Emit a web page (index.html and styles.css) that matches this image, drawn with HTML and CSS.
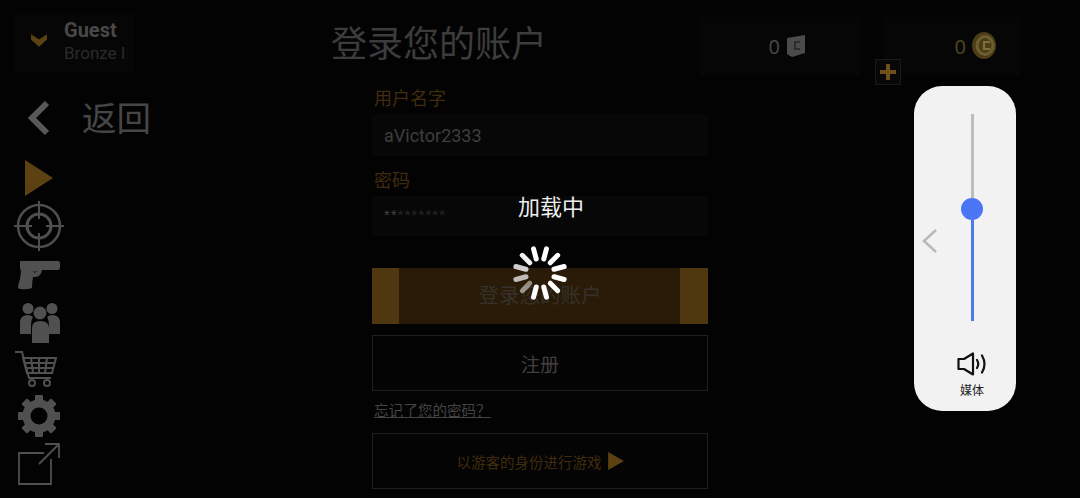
FILE: index.html
```html
<!DOCTYPE html>
<html lang="zh-CN">
<head>
    <meta charset="UTF-8">
    <title>登录您的账户</title>
    <link rel="stylesheet" href="styles.css">
</head>
<body>
<div class="stage">
    <!-- Top bar -->
    <header class="topbar">
        <div class="player">
            <svg class="rank" viewBox="0 0 18 14"><path d="M0 0 L9 6 L18 0 L18 6 L9 14 L0 6 Z"/></svg>
            <div class="player-text">
                <b>Guest</b>
                <span>Bronze I</span>
            </div>
        </div>
        <h1>登录您的账户</h1>
        <div class="wallet wallet-credit">
            <span>0</span>
            <svg class="cash" width="20" height="22" viewBox="0 0 20 22">
                <path d="M1 3 L19 0 L19 18 L6 22 L1 19 Z" fill="#4b4b4b"/>
                <path d="M14 7 L9 7 L9 14 L14 14" fill="none" stroke="#2d2d2d" stroke-width="2"/>
            </svg>
        </div>
        <div class="wallet wallet-gold">
            <span>0</span>
            <svg width="24" height="27" viewBox="0 0 24 27">
                <ellipse cx="12" cy="13.500" rx="12" ry="13.500" fill="#4a3d18"/>
                <ellipse cx="13" cy="13.500" rx="8" ry="9" fill="none" stroke="#6b5f30" stroke-width="3"/>
                <path d="M18 10 L12 10 L12 17 L18 17" fill="none" stroke="#7d7038" stroke-width="2"/>
            </svg>
        </div>
    </header>
    <button class="add-btn">
        <svg width="16" height="16" viewBox="0 0 16 16"><path d="M6 0 H10 V6 H16 V10 H10 V16 H6 V10 H0 V6 H6 Z"/></svg>
    </button>

    <div class="main">
        <!-- Left menu -->
        <nav class="sidebar">
            <a class="back">
                <svg width="26" height="36" viewBox="0 0 26 36"><path d="M21 3 L6 18 L21 33" fill="none" stroke="#585858" stroke-width="6"/></svg>
                <span>返回</span>
            </a>
            <svg class="menu-icon play" width="50" height="36" viewBox="0 0 50 36"><path d="M11 0 L39 18 L11 36 Z" fill="#5c4112"/></svg>
            <svg class="menu-icon target" width="50" height="50" viewBox="0 0 50 50">
                <g fill="none" stroke="#4f4f4f">
                    <circle cx="25" cy="25" r="21" stroke-width="2.500"/>
                    <circle cx="25" cy="25" r="12" stroke-width="3"/>
                    <path d="M25 0 V18 M25 32 V50 M0 25 H18 M32 25 H50" stroke-width="2"/>
                </g>
            </svg>
            <svg class="menu-icon gun" width="42" height="30" viewBox="0 0 42 30">
                <path d="M2 1 H40 Q42 1 42 3 V8 Q42 10 40 10 H24 Q23 17 17 17 H15 Q14 22 14 28 Q10 30 2 29 Q0 29 0 26 Q3 18 3 11 L2 8 Z" fill="#505050"/>
                <path d="M15 11 Q16 14 19 11" fill="none" stroke="#1b1b1b" stroke-width="1"/>
            </svg>
            <svg class="menu-icon people" width="40" height="40" viewBox="0 0 40 40">
                <g fill="#505050">
                    <circle cx="8" cy="5.500" r="5.500"/>
                    <circle cx="32" cy="5.500" r="5.500"/>
                    <path d="M0 31 V20 Q0 12 8 12 Q11 12 13 14 Q11 17 11 23 V31 Z"/>
                    <path d="M40 31 V20 Q40 12 32 12 Q29 12 27 14 Q29 17 29 23 V31 Z"/>
                    <circle cx="20" cy="10" r="6.500"/>
                    <path d="M12 40 V25 Q12 18 20 18 Q29 18 29 25 V40 Z"/>
                </g>
            </svg>
            <svg class="menu-icon cart" width="42" height="36" viewBox="0 0 42 36">
                <g fill="none" stroke="#505050" stroke-width="2">
                    <path d="M0 1 H7 L14 27 H36"/>
                    <path d="M8 7 H41 L37 22 H12 Z"/>
                    <path d="M11 12 H40 M12 17 H38 M16 7 L18 22 M24 7 V22 M32 7 L30 22"/>
                    <circle cx="17" cy="32" r="3"/>
                    <circle cx="32" cy="32" r="3"/>
                </g>
            </svg>
            <svg class="menu-icon gear" width="42" height="42" viewBox="0 0 42 42">
                <circle cx="21" cy="21" r="12.500" fill="none" stroke="#505050" stroke-width="8"/>
                <g fill="#505050">
                    <rect x="17" y="0" width="8" height="8" rx="1"/>
                    <rect x="17" y="34" width="8" height="8" rx="1"/>
                    <rect x="0" y="17" width="8" height="8" rx="1"/>
                    <rect x="34" y="17" width="8" height="8" rx="1"/>
                    <g transform="rotate(45 21 21)">
                        <rect x="17" y="0" width="8" height="8" rx="1"/>
                        <rect x="17" y="34" width="8" height="8" rx="1"/>
                        <rect x="0" y="17" width="8" height="8" rx="1"/>
                        <rect x="34" y="17" width="8" height="8" rx="1"/>
                    </g>
                </g>
            </svg>
            <svg class="menu-icon share" width="42" height="42" viewBox="0 0 42 42">
                <g fill="none" stroke="#505050" stroke-width="1.800">
                    <path d="M33 16 V41 H1 V10 H26"/>
                    <path d="M21 21 L41 1 M27 1 H41 V15"/>
                </g>
            </svg>
        </nav>

        <!-- Login form -->
        <form class="login">
            <label class="field-label">用户名字</label>
            <div class="field field-name">aVictor2333</div>
            <label class="field-label">密码</label>
            <div class="field field-pass"><i>**</i>*******</div>
            <button class="btn btn-login" type="button">登录您的账户</button>
            <button class="btn btn-outline" type="button">注册</button>
            <a class="forgot">忘记了您的密码？</a>
            <button class="btn btn-outline btn-guest" type="button">
                以游客的身份进行游戏
                <svg width="16" height="18" viewBox="0 0 14 16"><path d="M0 0 L14 8 L0 16 Z"/></svg>
            </button>
        </form>
    </div>

    <!-- Loading overlay -->
    <div class="loading">
        <p>加载中</p>
        <svg width="60" height="60" viewBox="-30 -30 60 60">
            <g stroke="#fff" stroke-width="5" stroke-linecap="round">
                <line y1="-14.500" y2="-25" transform="rotate(15)"/>
                <line y1="-14.500" y2="-25" transform="rotate(45)"/>
                <line y1="-14.500" y2="-25" transform="rotate(75)"/>
                <line y1="-14.500" y2="-25" transform="rotate(105)"/>
                <line y1="-14.500" y2="-25" transform="rotate(135)"/>
                <line y1="-14.500" y2="-25" transform="rotate(165)"/>
                <line y1="-14.500" y2="-25" transform="rotate(195)"/>
                <line y1="-14.500" y2="-25" transform="rotate(225)" opacity="0.500"/>
                <line y1="-14.500" y2="-25" transform="rotate(255)" opacity="0.700"/>
                <line y1="-14.500" y2="-25" transform="rotate(285)" opacity="0.800"/>
                <line y1="-14.500" y2="-25" transform="rotate(315)" opacity="0.950"/>
                <line y1="-14.500" y2="-25" transform="rotate(345)"/>
            </g>
        </svg>
    </div>

    <!-- System volume panel -->
    <aside class="volume">
        <svg class="vol-back" width="16" height="24" viewBox="0 0 16 24"><path d="M14 1 L2 12 L14 23" fill="none" stroke="#b9b9b9" stroke-width="2.500"/></svg>
        <div class="slider">
            <div class="slider-rest"></div>
            <div class="slider-knob"></div>
            <div class="slider-fill"></div>
        </div>
        <svg class="speaker" width="30" height="24" viewBox="0 0 30 24">
            <g fill="none" stroke="#111" stroke-width="2.200" stroke-linejoin="round" stroke-linecap="round">
                <path d="M1.500 7 H7 L16 1.500 V22.500 L7 17 H1.500 Z"/>
                <path d="M20 8 Q22.500 12 20 16"/>
                <path d="M25 3.500 Q30 12 25 20.500"/>
            </g>
        </svg>
        <span class="vol-label">媒体</span>
    </aside>
</div>
</body>
</html>
```

FILE: styles.css
```css
* { box-sizing: border-box; }
html, body { margin: 0; padding: 0; background: #030303; }
body { font-family: "Noto Sans CJK SC", "Noto Sans", sans-serif; }
.stage { position: relative; width: 1080px; height: 498px; overflow: hidden; background: #030303; }

/* top bar */
.topbar { display: flex; align-items: flex-start; height: 88px; padding: 16px 60px 0 13px; }
.player { display: flex; align-items: center; width: 122px; height: 60px; margin-top: -3px; background: #060606; padding-left: 18px; }
.rank { width: 16px; height: 13px; fill: #5c4112; margin-top: -6px; }
.player-text { display: flex; flex-direction: column; margin: -4px 0 0 17px; font-family: Roboto, sans-serif; white-space: nowrap; }
.player-text b { font-size: 20px; line-height: 24px; color: #484848; }
.player-text span { font-size: 17px; line-height: 22px; color: #2a2a2a; }
.topbar h1 { width: 213px; margin: 2px 0 0 196px; font-size: 36px; line-height: 46px; font-weight: 400; color: #3c3c3c; white-space: nowrap; }
.wallet { display: flex; align-items: center; justify-content: flex-end; gap: 6px; height: 58px; margin-top: 1px; background: #060606; font-family: "Noto Sans", sans-serif; font-size: 20px; }
.wallet-credit { width: 160px; margin-left: 156px; padding-right: 54px; color: #464646; }
.wallet-gold { width: 136px; margin-left: 24px; padding-right: 24px; color: #4d4520; }
.wallet-gold svg { margin-top: -2px; }
.add-btn { position: absolute; left: 875px; top: 59px; width: 26px; height: 26px; padding: 0; display: flex; align-items: center; justify-content: center; background: #080808; border: 1px solid #1a1a1a; }
.add-btn svg { fill: #70501a; }

/* main area */
.main { display: flex; }
.sidebar { width: 372px; display: flex; flex-direction: column; padding-left: 14px; }
.back { display: flex; align-items: center; height: 60px; padding-left: 12px; }
.back span { margin: -4px 0 0 30px; font-size: 34.500px; line-height: 44px; color: #464646; }
.menu-icon { display: block; }
.play { margin-top: 12px; }
.target { margin-top: 5px; }
.gun { margin: 9px 0 0 4px; }
.people { margin: 13px 0 0 6px; }
.cart { margin: 8px 0 0 1px; }
.gear { margin: 8px 0 0 4px; }
.share { margin: 6px 0 0 4px; }

/* login form */
.login { width: 336px; display: flex; flex-direction: column; }
.field-label { height: 26px; padding-left: 2px; font-size: 18px; line-height: 18px; color: #412c0d; }
.field { height: 42px; background: #070707; padding: 1px 0 0 12px; font-family: Roboto, sans-serif; font-size: 18px; line-height: 41px; color: #3e3e3e; }
.field-name { margin-bottom: 14px; }
.field-pass { height: 40px; padding-top: 0; line-height: 38px; font-size: 13px; color: #242424; letter-spacing: 1.300px; }
.field-pass i { font-style: normal; color: #3e3e3e; }
.btn { display: flex; align-items: center; justify-content: center; gap: 6px; width: 336px; height: 56px; padding: 0; font-family: inherit; }
.btn-login { margin-top: 32px; border: none; padding-bottom: 4px; font-size: 20.500px; color: #35312a; background: linear-gradient(to right, #4f370f 27px, #291b07 27px, #291b07 308px, #4f370f 308px); }
.btn-outline { margin-top: 11px; background: #040404; border: 1px solid #1f1f1f; font-size: 19px; color: #404040; }
.forgot { margin-top: 10px; height: 22px; padding-left: 2px; font-size: 14.600px; line-height: 18px; color: #444; text-decoration: underline; }
.btn-guest { margin-top: 10px; font-size: 14.500px; color: #412c0d; }
.btn-guest svg { fill: #5c4112; }

/* loading overlay */
.loading { position: absolute; left: 480px; top: 190px; width: 120px; display: flex; flex-direction: column; align-items: center; }
.loading p { margin: 0 0 23px 22px; font-size: 22px; line-height: 30px; color: #eee; }

/* volume panel */
.volume { position: absolute; left: 914px; top: 86px; width: 102px; height: 325px; display: flex; flex-direction: column; align-items: center; padding: 28px 0 0 14px; border-radius: 28px; background: #f2f2f2; }
.vol-back { position: absolute; left: 8px; top: 143px; }
.slider { position: relative; display: flex; flex-direction: column; align-items: center; width: 24px; height: 207px; }
.slider-rest { width: 3px; height: 84px; background: #bdbdbd; }
.slider-fill { width: 3px; flex: 1; background: #4f7be8; }
.slider-knob { width: 22px; height: 22px; border-radius: 50%; background: #4a76f5; }
.speaker { margin: 31px 0 0 0; }
.vol-label { margin: 6px 0 0; font-size: 12px; line-height: 16px; color: #222; }
```
